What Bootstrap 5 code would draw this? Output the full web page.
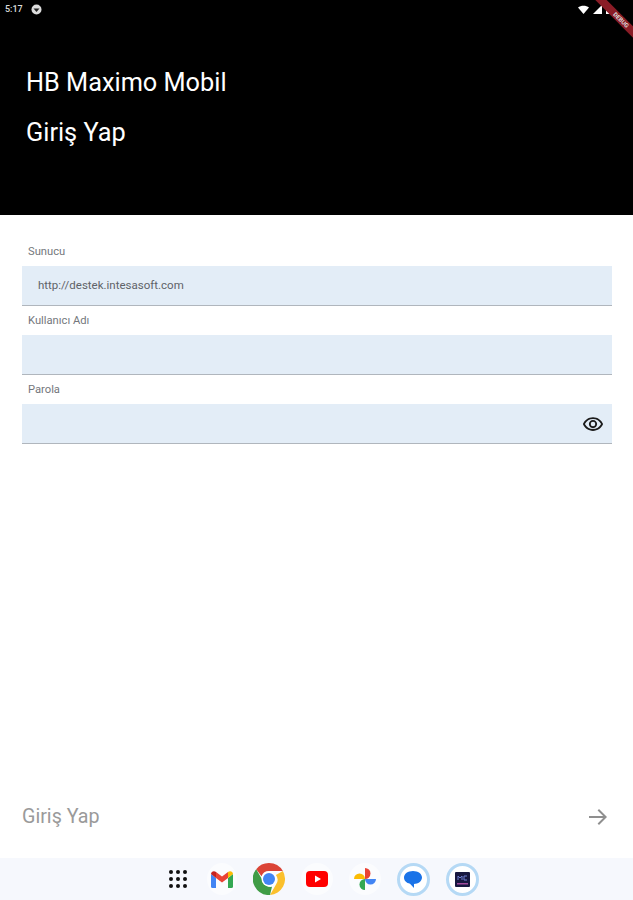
<!DOCTYPE html>
<html lang="tr">
<head>
    <meta charset="UTF-8">
    <meta name="viewport" content="width=device-width, initial-scale=1.0">
    <title>HB Maximo Mobil</title>
    <link href="https://cdn.jsdelivr.net/npm/bootstrap@5.3.0/dist/css/bootstrap.min.css" rel="stylesheet">
    <style>
        html, body { height: 900px; overflow: hidden; }
        body { font-family: Roboto, "Liberation Sans", sans-serif; background: #fff; }
        .app-frame { height: 900px; width: 633px; position: relative; overflow: hidden; }
        .app-head { height: 215px; background: #000; color: #fff; }
        .status-row { height: 18px; padding: 1px 6px 0 5px; font-size: 9px; font-weight: 500; color: #ddd; }
        .head-title { font-size: 25.3px; line-height: 28px; padding-left: 26px; margin-top: 51px; }
        .head-sub { font-size: 25.3px; line-height: 28px; padding-left: 26px; margin-top: 22px; }
        .form-area { padding: 30px 21px 0 22px; }
        .field-label { font-size: 11.2px; line-height: 14px; height: 21px; padding: 0 0 0 6px; color: #74777c; margin: 0; }
        .field-box { height: 40px; background: #e3edf7; border-bottom: 1px solid #b0b6bd; padding: 0 8px 0 16px; font-size: 11.5px; color: #5f6368; margin-bottom: 8px; }
        .submit-row { height: 42px; margin-top: auto; padding: 0 22px 0 22px; margin-bottom: 20px; color: #9a9a9a; font-size: 19.7px; }
        .dock-bar { height: 42px; background: #f6f8fd; gap: 16px; padding-left: 10px; }
        .dock-item { width: 32px; height: 32px; border-radius: 50%; background: #fbfcfe; }
        .dock-grid { width: 26px; background: transparent; }
        .dock-mail { width: 30px; }
        .dock-ring { width: 33px; height: 33px; border-radius: 50%; border: 3px solid #b5d9f5; background: #fff; }
        .debug-tag { position: absolute; top: 16px; right: -24px; width: 72px; height: 8px; background: #8a1c26; transform: rotate(45deg); color: #ddd; font-size: 6px; font-weight: 700; line-height: 8px; text-align: center; }
    </style>
</head>
<body>
    <div class="app-frame d-flex flex-column">
        <div class="app-head">
            <div class="status-row d-flex align-items-center justify-content-between">
                <div class="d-flex align-items-center gap-2">
                    <span>5:17</span>
                    <svg width="11" height="11" viewBox="0 0 11 11"><circle cx="5.500" cy="5.500" r="5" fill="#ddd"/><path d="M2.500 4.500h6L5.500 8z" fill="#222"/></svg>
                </div>
                <div class="d-flex align-items-center gap-1" style="margin-right:16px">
                    <svg width="11" height="9" viewBox="0 0 11 9"><path d="M0 2.500C3 0 8 0 11 2.500L5.500 9z" fill="#fff"/></svg>
                    <svg width="9" height="9" viewBox="0 0 9 9"><path d="M0 9L9 0v9z" fill="#fff"/></svg>
                    <svg width="5" height="9" viewBox="0 0 5 9"><path d="M1.500 0h2v1H5v8H0V1h1.500z" fill="#fff"/></svg>
                </div>
            </div>
            <div class="head-title">HB Maximo Mobil</div>
            <div class="head-sub">Giriş Yap</div>
        </div>

        <div class="form-area">
            <label class="field-label d-block">Sunucu</label>
            <div class="field-box d-flex align-items-center">http://destek.intesasoft.com</div>
            <label class="field-label d-block">Kullanıcı Adı</label>
            <div class="field-box d-flex align-items-center"></div>
            <label class="field-label d-block">Parola</label>
            <div class="field-box d-flex align-items-center justify-content-end">
                <svg width="22" height="22" viewBox="0 0 24 24"><path fill="#1c1c1c" d="M12 6.500c3.790 0 7.170 2.130 8.820 5.500-1.650 3.370-5.020 5.500-8.820 5.500S4.830 15.370 3.180 12C4.830 8.630 8.210 6.500 12 6.500m0-2C7 4.500 2.730 7.610 1 12c1.730 4.390 6 7.500 11 7.500s9.270-3.110 11-7.500c-1.730-4.390-6-7.500-11-7.500zm0 5a2.500 2.500 0 010 5 2.500 2.500 0 010-5m0-2c-2.480 0-4.500 2.020-4.500 4.500s2.020 4.500 4.500 4.500 4.500-2.020 4.500-4.500-2.020-4.500-4.500-4.500z"/></svg>
            </div>
        </div>

        <div class="submit-row d-flex align-items-center justify-content-between">
            <span>Giriş Yap</span>
            <svg width="24" height="24" viewBox="0 0 24 24"><path fill="#8f8f8f" d="M12 4l-1.410 1.410L16.170 11H2v2h14.170l-5.580 5.590L12 20l8-8z"/></svg>
        </div>

        <div class="dock-bar d-flex align-items-center justify-content-center">
            <div class="dock-item dock-grid d-flex align-items-center justify-content-center">
                <svg width="20" height="20" viewBox="0 0 20 20" fill="#111" class="flex-shrink-0">
                    <circle cx="3" cy="3" r="2"/><circle cx="10" cy="3" r="2"/><circle cx="17" cy="3" r="2"/>
                    <circle cx="3" cy="10" r="2"/><circle cx="10" cy="10" r="2"/><circle cx="17" cy="10" r="2"/>
                    <circle cx="3" cy="17" r="2"/><circle cx="10" cy="17" r="2"/><circle cx="17" cy="17" r="2"/>
                </svg>
            </div>
            <div class="dock-item dock-mail d-flex align-items-center justify-content-center">
                <svg width="22" height="17" viewBox="0 0 22 17">
                    <path d="M0 3v12.500A1.500 1.500 0 001.500 17H5V7z" fill="#4285f4"/>
                    <path d="M17 7v10h3.500a1.500 1.500 0 001.500-1.500V3z" fill="#34a853"/>
                    <path d="M5 7l6 4.500L17 7V1l-6 4.500L5 1z" fill="#ea4335"/>
                    <path d="M0 3c0-2.500 3-3.700 5-2v6z" fill="#c5221f"/>
                    <path d="M17 1c2-1.700 5-.5 5 2l-5 4z" fill="#fbbc04"/>
                </svg>
            </div>
            <div class="dock-item d-flex align-items-center justify-content-center">
                <svg width="32" height="32" viewBox="0 0 32 32">
                    <path d="M16 0a16 16 0 0113.860 8H16a8 8 0 00-7.500 5.300L3.200 6.300A16 16 0 0116 0z" fill="#db4437"/>
                    <path d="M29.860 8A16 16 0 0117 32l6-10.500A8 8 0 0022.900 12z" fill="#fbc02d"/>
                    <path d="M17 32A16 16 0 013.200 6.300L10 18a8 8 0 009 5.800z" fill="#3f9c46"/>
                    <circle cx="16" cy="16" r="7.500" fill="#fff"/>
                    <circle cx="16" cy="16" r="6" fill="#4285f4"/>
                </svg>
            </div>
            <div class="dock-item d-flex align-items-center justify-content-center">
                <svg width="22" height="16" viewBox="0 0 22 16">
                    <rect width="22" height="16" rx="4" fill="#f00"/>
                    <path d="M9 4.500L15 8l-6 3.500z" fill="#fff"/>
                </svg>
            </div>
            <div class="dock-item d-flex align-items-center justify-content-center">
                <svg width="24" height="24" viewBox="0 0 24 24">
                    <path d="M12 12H1a5.500 5.500 0 0111 0z" fill="#fbbc04"/>
                    <path d="M12 12V1a5.500 5.500 0 010 11z" fill="#ea4335"/>
                    <path d="M12 12h11a5.500 5.500 0 01-11 0z" fill="#4285f4"/>
                    <path d="M12 12v11a5.500 5.500 0 010-11z" fill="#34a853"/>
                </svg>
            </div>
            <div class="dock-ring d-flex align-items-center justify-content-center">
                <svg width="18" height="17" viewBox="0 0 18 17"><path d="M9 0c5 0 9 2.800 9 6.500S14 13 10 13v4l-4-4.300C2.500 12 0 9.800 0 6.500 0 2.800 4 0 9 0z" fill="#1a73e8"/></svg>
            </div>
            <div class="dock-ring d-flex align-items-center justify-content-center">
                <svg width="15" height="15" viewBox="0 0 15 15">
                    <rect width="15" height="15" rx="1" fill="#17173f"/>
                    <path d="M3 8V4l2 2 2-2v4M9 4v4M9 4h3M9 8h3" fill="none" stroke="#6f7fd0" stroke-width="1"/>
                    <rect x="2" y="11" width="11" height="1.500" fill="#a04a9c"/>
                </svg>
            </div>
        </div>

        <div class="debug-tag">DEBUG</div>
    </div>

    <script src="https://cdn.jsdelivr.net/npm/bootstrap@5.3.0/dist/js/bootstrap.bundle.min.js"></script>
</body>
</html>
